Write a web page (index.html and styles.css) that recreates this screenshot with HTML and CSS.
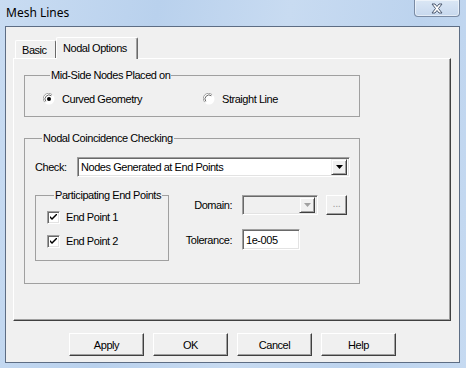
FILE: index.html
```html
<!DOCTYPE html>
<html lang="en">
<head>
	<meta charset="UTF-8">
	<title>Mesh Lines</title>
	<link rel="stylesheet" href="styles.css">
</head>
<body>
	<div class="window">
		<!-- Title bar -->
		<div class="titlebar">
			<span class="title">Mesh Lines</span>
			<div class="close-btn">
				<svg width="14" height="11" viewBox="0 0 14 11">
					<path d="M2 1 L5 1 L7 3.5 L9 1 L12 1 L8.5 5.5 L12 10 L9 10 L7 7.5 L5 10 L2 10 L5.5 5.5 Z" fill="#fff" stroke="#4a5870" stroke-width="1"/>
				</svg>
			</div>
		</div>

		<!-- Dialog client area -->
		<div class="client">
			<div class="tabs">
				<div class="tab">Basic</div>
				<div class="tab active">Nodal Options</div>
			</div>

			<div class="panel">
				<fieldset class="group group-mid">
					<legend>Mid-Side Nodes Placed on</legend>
					<div class="radio-row">
						<label class="radio radio-first">
							<svg class="radio-box" width="12" height="12" viewBox="0 0 12 12">
								<circle cx="6" cy="6" r="5.5" fill="#fff"/>
								<path d="M1.8 9.2 A5 5 0 0 1 9.2 1.8" fill="none" stroke="#a0a0a0" stroke-width="1"/>
								<path d="M2.8 8.4 A4 4 0 0 1 8.4 2.8" fill="none" stroke="#696969" stroke-width="1"/>
								<circle cx="6" cy="6" r="2" fill="#000"/>
							</svg>
							Curved Geometry
						</label>
						<label class="radio">
							<svg class="radio-box" width="12" height="12" viewBox="0 0 12 12">
								<circle cx="6" cy="6" r="5.5" fill="#fff"/>
								<path d="M1.8 9.2 A5 5 0 0 1 9.2 1.8" fill="none" stroke="#a0a0a0" stroke-width="1"/>
								<path d="M2.8 8.4 A4 4 0 0 1 8.4 2.8" fill="none" stroke="#696969" stroke-width="1"/>
							</svg>
							Straight Line
						</label>
					</div>
				</fieldset>

				<fieldset class="group group-check">
					<legend>Nodal Coincidence Checking</legend>
					<div class="check-row">
						<span class="check-label">Check:</span>
						<div class="combo combo-check">
							<span class="combo-text">Nodes Generated at End Points</span>
							<span class="combo-btn">
								<svg width="7" height="4" viewBox="0 0 7 4"><path d="M0 0 H7 L3.5 4 Z" fill="#000"/></svg>
							</span>
						</div>
					</div>

					<div class="lower">
						<fieldset class="group group-ends">
							<legend>Participating End Points</legend>
							<label class="check">
								<span class="check-box">
									<svg width="7" height="7" viewBox="0 0 7 7"><path d="M0 2 L2 4 L7 -1 L7 1 L2 6 L0 4 Z" fill="#000"/></svg>
								</span>
								End Point 1
							</label>
							<label class="check">
								<span class="check-box">
									<svg width="7" height="7" viewBox="0 0 7 7"><path d="M0 2 L2 4 L7 -1 L7 1 L2 6 L0 4 Z" fill="#000"/></svg>
								</span>
								End Point 2
							</label>
						</fieldset>

						<div class="fields">
							<div class="field-row">
								<span class="field-label">Domain:</span>
								<div class="combo combo-domain disabled">
									<span class="combo-text"></span>
									<span class="combo-btn">
										<svg width="7" height="4" viewBox="0 0 7 4"><path d="M0 0 H7 L3.5 4 Z" fill="#a0a0a0"/></svg>
									</span>
								</div>
								<div class="btn dots">...</div>
							</div>
							<div class="field-row field-tol">
								<span class="field-label">Tolerance:</span>
								<div class="edit">1e-005</div>
							</div>
						</div>
					</div>
				</fieldset>
			</div>

			<div class="buttons">
				<div class="btn push">Apply</div>
				<div class="btn push">OK</div>
				<div class="btn push">Cancel</div>
				<div class="btn push">Help</div>
			</div>
		</div>
	</div>
</body>
</html>
```

FILE: styles.css
```css
* {
	margin: 0;
	padding: 0;
	box-sizing: border-box;
}

body {
	font-family: 'Liberation Sans', Arial, sans-serif;
	font-size: 11px;
	letter-spacing: -0.45px;
	white-space: nowrap;
	color: #000;
	background: #c4d8ee;
}

/* Window frame */
.window {
	width: 466px;
	height: 368px;
	background: linear-gradient(100deg, #c9dcf2 0%, #b9d1ed 30%, #c8dbf1 55%, #bcd3ee 80%, #c6daf1 100%);
	display: flex;
	flex-direction: column;
}

.titlebar {
	height: 26px;
	display: flex;
	justify-content: space-between;
	align-items: flex-start;
	padding-left: 6px;
	padding-right: 6px;
}

.title {
	font-family: 'Noto Sans', sans-serif;
	font-size: 12px;
	letter-spacing: 0;
	line-height: 25px;
	color: #000;
}

.close-btn {
	width: 46px;
	height: 17px;
	border: 1px solid #7a8ba4;
	border-top: none;
	border-radius: 0 0 4px 4px;
	background: linear-gradient(#dbe7f5, #c7d8ee);
	box-shadow: inset 0 0 0 1px rgba(255, 255, 255, 0.5);
	display: flex;
	align-items: center;
	justify-content: center;
}

/* Client area */
.client {
	margin: 0 6px 0 5px;
	height: 337px;
	border: 1px solid #5d6d84;
	background: #f0f0f0;
	display: flex;
	flex-direction: column;
}

/* Tabs */
.tabs {
	display: flex;
	align-items: flex-end;
	margin-left: 7px;
	margin-top: 10px;
	height: 22px;
	position: relative;
	z-index: 1;
	margin-bottom: -1px;
}

.tab {
	height: 18px;
	margin-bottom: 1px;
	padding: 0 6px;
	line-height: 18px;
	border: 1px solid #fff;
	border-bottom: none;
	border-right-color: #696969;
	border-radius: 2px 2px 0 0;
	background: #f0f0f0;
}

.tab:first-child {
	margin-left: 2px;
	width: 41px;
}

.tab.active {
	height: 22px;
	margin-bottom: 0;
	width: 82px;
	padding: 0 6px;
	line-height: 20px;
	box-shadow: inset -1px 0 #a0a0a0;
}

.panel {
	margin: 0 8px 0 7px;
	height: 263px;
	border: 1px solid;
	border-color: #fff #404040 #404040 #fff;
	box-shadow: inset -1px -1px #a0a0a0;
	padding-left: 10px;
}

/* Group boxes */
fieldset.group {
	border: 1px solid #a0a0a0;
	min-width: 0;
}

fieldset.group legend {
	margin-left: 7px;
	padding: 0 1px;
	line-height: 13px;
}

.group-mid {
	width: 336px;
	margin-top: 10px;
	padding: 10px 0 10px 18px;
}

.radio-row {
	display: flex;
	height: 14px;
}

.radio {
	display: flex;
	align-items: center;
	gap: 7px;
}

.radio-first {
	width: 160px;
}

.group-check {
	width: 336px;
	margin-top: 15px;
	padding: 12px 0 22px 10px;
}

.check-row {
	display: flex;
	align-items: center;
}

.check-label {
	width: 42px;
}

/* Combo boxes and edits */
.combo,
.edit {
	height: 20px;
	border: 1px solid;
	border-color: #a0a0a0 #fff #fff #a0a0a0;
	box-shadow: inset 1px 1px #696969, inset -1px -1px #e3e3e3;
	background: #fff;
	display: flex;
	align-items: center;
	padding: 2px;
}

.combo-check {
	width: 273px;
}

.combo-text {
	flex-grow: 1;
	padding-left: 1px;
}

.combo-btn {
	width: 16px;
	height: 16px;
	border: 1px solid;
	border-color: #f0f0f0 #404040 #404040 #f0f0f0;
	box-shadow: inset 1px 1px #fff, inset -1px -1px #a0a0a0;
	background: #f0f0f0;
	display: flex;
	align-items: center;
	justify-content: center;
}

.combo.disabled {
	background: #f0f0f0;
}

.combo-domain {
	width: 76px;
}

.edit {
	width: 58px;
	height: 21px;
	padding-left: 3px;
}

.lower {
	display: flex;
	margin-top: 12px;
}

.group-ends {
	width: 134px;
	padding: 8px 0 12px 11px;
	display: flex;
	flex-direction: column;
	gap: 10px;
}

.check {
	display: flex;
	align-items: center;
	gap: 6px;
	height: 14px;
}

.check-box {
	width: 13px;
	height: 13px;
	border: 1px solid;
	border-color: #a0a0a0 #fff #fff #a0a0a0;
	box-shadow: inset 1px 1px #696969, inset -1px -1px #e3e3e3;
	background: #fff;
	display: flex;
	align-items: center;
	justify-content: center;
}

.fields {
	margin-left: 10px;
	margin-top: 6px;
}

.field-row {
	display: flex;
	align-items: center;
}

.field-tol {
	margin-top: 14px;
}

.field-label {
	width: 53px;
	margin-right: 10px;
	text-align: right;
}

/* Push buttons */
.btn {
	background: #f0f0f0;
	border: 1px solid;
	border-color: #fff #404040 #404040 #fff;
	box-shadow: inset -1px -1px #a0a0a0;
	display: flex;
	align-items: center;
	justify-content: center;
}

.dots {
	width: 21px;
	height: 20px;
	margin-left: 8px;
	color: #a0a0a0;
	padding-bottom: 4px;
}

.buttons {
	display: flex;
	justify-content: center;
	gap: 9px;
	margin-top: 12px;
}

.push {
	width: 75px;
	height: 23px;
}
```
